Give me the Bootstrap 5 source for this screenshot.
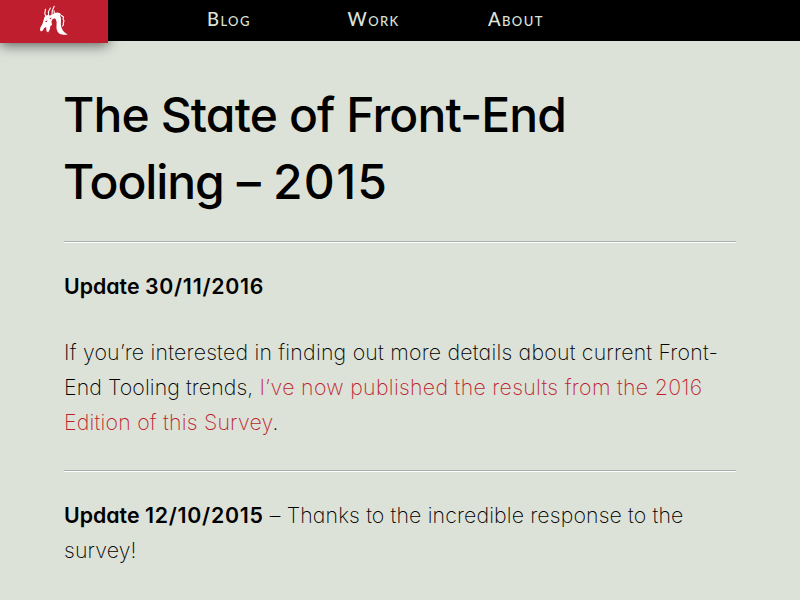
<!DOCTYPE html>
<html lang="en">
<head>
<meta charset="utf-8">
<meta name="viewport" content="width=device-width, initial-scale=1">
<title>The State of Front-End Tooling – 2015</title>
<link href="https://cdn.jsdelivr.net/npm/bootstrap@5.3.0/dist/css/bootstrap.min.css" rel="stylesheet">
<style>
body { background: #dce2d8; color: #000; font: 250 21.3px/35.2px Inter, sans-serif; font-feature-settings: "cv11" 1; overflow: hidden; }
.site-head { height: 41px; background: #000; }
.brand-tab { width: 108px; height: 43px; background: #be1e2d; box-shadow: 0 2px 12px rgba(0,0,0,.6); }
.site-nav { padding-left: 99px; }
.site-nav a { width: 140.5px; color: #dce2d8; font: 500 18.5px/39px Lato, sans-serif; font-variant: small-caps; letter-spacing: 1.4px; text-decoration: none; }
.article { padding: 40px 64px 0; white-space: nowrap; }
h1 { font-size: 48px; font-weight: 500; line-height: 67.2px; margin: 0 0 26px -1px; }
.title-top { letter-spacing: -.87px; }
.title-word { letter-spacing: -1.1px; word-spacing: 1.5px; }
.title-year { letter-spacing: 1.3px; }
.rule { height: 2px; background: linear-gradient(#aaaeac 50%, #fff 50%); margin-bottom: 26px; }
.article p { margin: 0 0 30px; letter-spacing: .22px; }
.article .details { margin-bottom: 29.5px; }
.article a { color: #be1e2d; text-decoration: none; }
.trends { letter-spacing: .09px; }
.results { letter-spacing: .31px; }
.article .thanks { letter-spacing: .14px; }
strong { font-weight: 600; letter-spacing: .02px; }
.date { letter-spacing: .75px; }
</style>
</head>
<body>
<header class="site-head d-flex">
  <a class="brand-tab d-flex flex-shrink-0 position-relative" href="#" aria-label="Home">
    <svg width="108" height="43" viewBox="0 0 108 43">
      <path fill="#fff" d="m44.5 17 2.5-2 3 .5 2.5-1 2-1.5 3-.5 2.6.8 1.4 2.2-1.5-.3.9 3c.5 2.4-.3 4.6.1 7.3.5 3.8 2.7 7 6.7 9.1-5.5.7-9.7-.5-11-5.2-.8-3.5.7-6.5-.6-9.5-.7-1.6-2.5-1.7-3.8-.5l-.9 2.3.7 3-1.8 1.5-.4 3-1.8 3.2-1.7-1.4-.2-4-2 1-1.4 2.5-1.8.9-1-1.3.4-2.6 2-3.5Z"/>
      <path fill="none" stroke="#fff" stroke-width="1.1" stroke-linecap="round" stroke-linejoin="round" d="m46 17-1.2-3.5.7-4.3M48.6 16l-.2-4.2 2-3.8M52 15l.2-4 2-4.8M54.5 14l-.5-3.2M61.5 15.5l2 1.5-.5 2 1 2-.8 2.2.3 1.5-1 1.3"/>
      <path d="m45 22 2.3-2.1-.4 2.2ZM49.5 18.8l2-1.5-.5 2Z" fill="#be1e2d"/>
    </svg>
  </a>
  <nav class="site-nav d-flex">
    <a href="#">Blog</a><a href="#">Work</a><a href="#">About</a>
  </nav>
</header>
<main class="article">
  <h1><span class="title-top">The State of Front-End</span><br><span class="title-word">Tooling – </span><span class="title-year">2015</span></h1>
  <div class="rule"></div>
  <p><strong>Update <span class="date">30/11/2016</span></strong></p>
  <p class="details">If you’re interested in finding out more details about current Front-<br><span class="trends">End Tooling trends,</span> <a href="#"><span class="results">I’ve now published the results from the 2016</span><br>Edition of this Survey</a>.</p>
  <div class="rule"></div>
  <p class="thanks"><strong>Update <span class="date">12/10/2015</span></strong> – Thanks to the incredible response to the<br>survey!</p>
</main>
<script src="https://cdn.jsdelivr.net/npm/bootstrap@5.3.0/dist/js/bootstrap.bundle.min.js"></script>
</body>
</html>
